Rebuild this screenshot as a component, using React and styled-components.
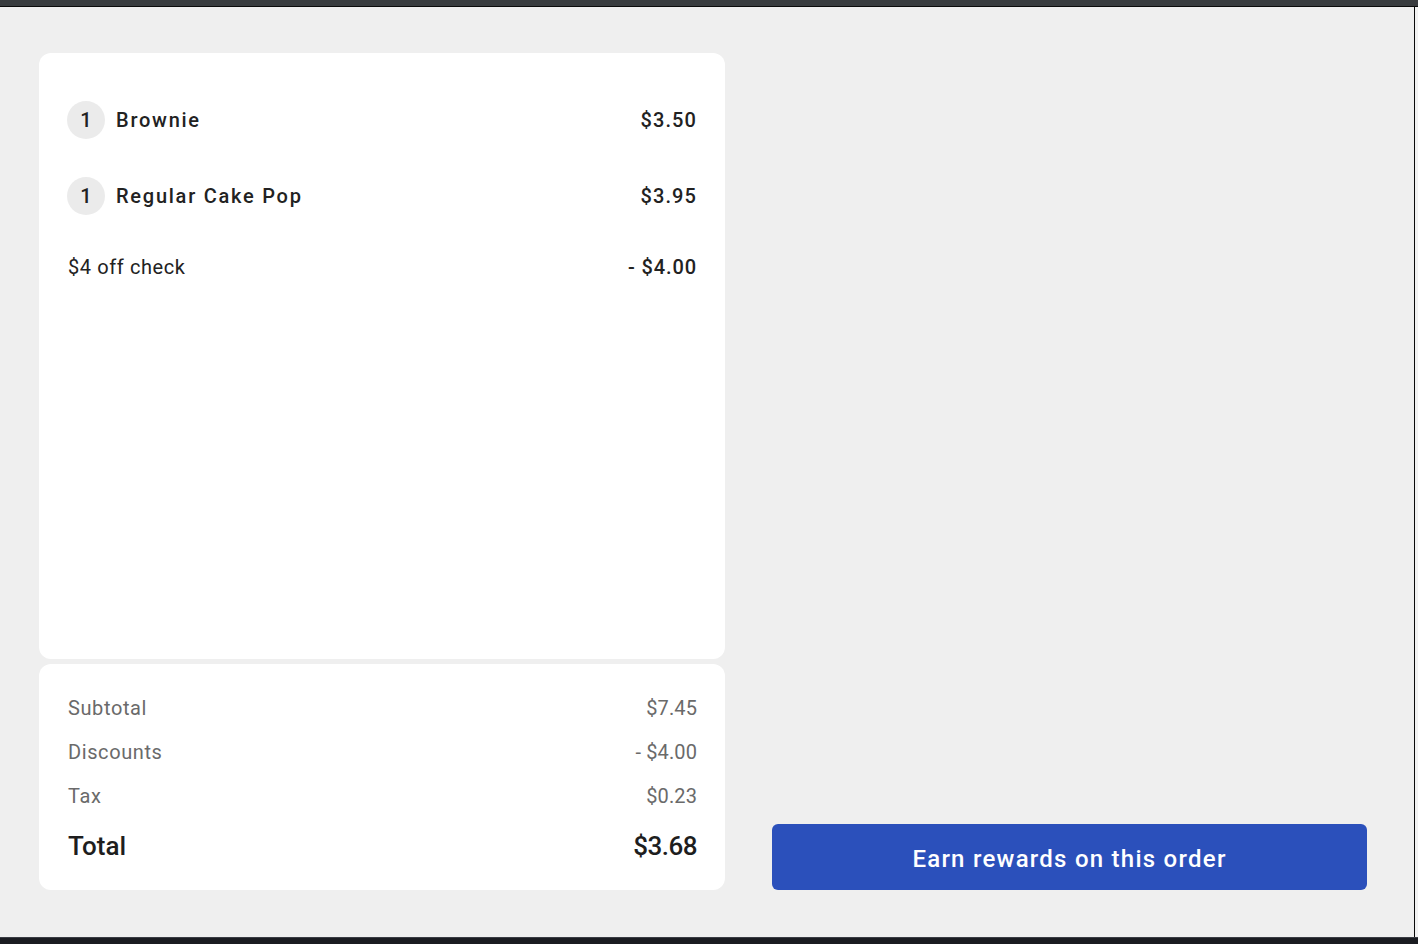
import React from "react";
import styled, { createGlobalStyle } from "styled-components";

const Global = createGlobalStyle`
  html, body { margin: 0; padding: 0; background: #efefef; }
  body { font-family: Roboto, "Noto Sans", sans-serif; }
  * { box-sizing: border-box; }
`;

const Frame = styled.div`
  width: 1418px;
  height: 944px;
  display: flex;
  flex-direction: column;
  background: #efefef;
  overflow: hidden;
`;

const TopBar = styled.div`
  height: 7px;
  flex: none;
  background: #393c3f;
  border-bottom: 1px solid #0b0b0b;
`;

const Middle = styled.div`
  flex: 1;
  display: flex;
  min-height: 0;
`;

const Screen = styled.main`
  width: 1415px;
  flex: none;
  border-right: 1px solid #0a0a0a;
  display: flex;
  align-items: flex-end;
  gap: 47px;
  padding: 46px 47px 47px 39px;
`;

const Edge = styled.div`
  flex: 1;
  background: #f2f2f2;
`;

const BottomBar = styled.div`
  height: 7px;
  flex: none;
  background: #1a1c21;
  border-top: 1px solid #3a3d44;
`;

const LeftColumn = styled.section`
  width: 686px;
  height: 100%;
  flex: none;
  display: flex;
  flex-direction: column;
  gap: 5px;
`;

const Card = styled.div`
  background: #ffffff;
  border-radius: 12px;
  padding: ${(p) => p.$pad};
  ${(p) => (p.$grow ? "flex: 1;" : "flex: none;")}
  display: flex;
  flex-direction: column;
`;

const ItemRow = styled.div`
  display: flex;
  align-items: center;
  height: 38px;
  & + & { margin-top: 38px; }
`;

const Badge = styled.span`
  width: 38px;
  height: 38px;
  border-radius: 50%;
  background: #ebebeb;
  display: flex;
  align-items: center;
  justify-content: center;
  font-size: 20px;
  font-weight: 500;
  color: #222;
  margin-right: 11px;
  flex: none;
`;

const ItemName = styled.span`
  flex: 1;
  font-size: 20px;
  font-weight: 500;
  letter-spacing: 1.75px;
  color: #222;
`;

const Price = styled.span`
  font-size: 20px;
  font-weight: 500;
  letter-spacing: ${(p) => p.$spacing || "1.1px"};
  color: #222;
  margin-right: -1px;
`;

const DiscountRow = styled.div`
  display: flex;
  justify-content: space-between;
  align-items: center;
  line-height: 24px;
  margin-top: 40px;
`;

const DiscountName = styled.span`
  font-size: 20px;
  font-weight: 400;
  letter-spacing: 0.6px;
  color: #222;
  margin-left: 1px;
`;

const SummaryRow = styled.div`
  display: flex;
  justify-content: space-between;
  align-items: center;
  line-height: 24px;
  font-size: 20px;
  color: #6a6a6a;
  & + & { margin-top: 20px; }
`;

const SummaryLabel = styled.span`
  letter-spacing: 0.6px;
`;

const SummaryValue = styled.span`
  letter-spacing: 0.1px;
`;

const TotalRow = styled.div`
  display: flex;
  justify-content: space-between;
  align-items: center;
  line-height: 32px;
  font-size: 26px;
  font-weight: 500;
  color: #1e1e1e;
  margin-top: 22px;
`;

const TotalAmount = styled.span`
  letter-spacing: -0.5px;
`;

const RightColumn = styled.section`
  flex: 1;
  display: flex;
  flex-direction: column;
  justify-content: flex-end;
`;

const RewardsButton = styled.button`
  height: 66px;
  width: 100%;
  border: none;
  border-radius: 6px;
  background: #2b50bb;
  color: #ffffff;
  font-family: Roboto, "Noto Sans", sans-serif;
  font-size: 24px;
  font-weight: 500;
  letter-spacing: 1.25px;
  padding: 3px 0 0;
  cursor: pointer;
`;

const items = [
  { qty: 1, name: "Brownie", price: "$3.50" },
  { qty: 1, name: "Regular Cake Pop", price: "$3.95" },
];

const summary = [
  ["Subtotal", "$7.45"],
  ["Discounts", "- $4.00"],
  ["Tax", "$0.23"],
];

export default function App() {
  return (
    <>
      <Global />
      <Frame>
        <TopBar />
        <Middle>
          <Screen>
            <LeftColumn>
              <Card $grow $pad="48px 29px 0 28px">
                {items.map((it) => (
                  <ItemRow key={it.name}>
                    <Badge>{it.qty}</Badge>
                    <ItemName>{it.name}</ItemName>
                    <Price>{it.price}</Price>
                  </ItemRow>
                ))}
                <DiscountRow>
                  <DiscountName>$4 off check</DiscountName>
                  <Price $spacing="0.9px">- $4.00</Price>
                </DiscountRow>
              </Card>
              <Card $pad="32px 28px 28px 29px">
                {summary.map(([k, v]) => (
                  <SummaryRow key={k}>
                    <SummaryLabel>{k}</SummaryLabel>
                    <SummaryValue>{v}</SummaryValue>
                  </SummaryRow>
                ))}
                <TotalRow>
                  <span>Total</span>
                  <TotalAmount>$3.68</TotalAmount>
                </TotalRow>
              </Card>
            </LeftColumn>
            <RightColumn>
              <RewardsButton>Earn rewards on this order</RewardsButton>
            </RightColumn>
          </Screen>
          <Edge />
        </Middle>
        <BottomBar />
      </Frame>
    </>
  );
}
